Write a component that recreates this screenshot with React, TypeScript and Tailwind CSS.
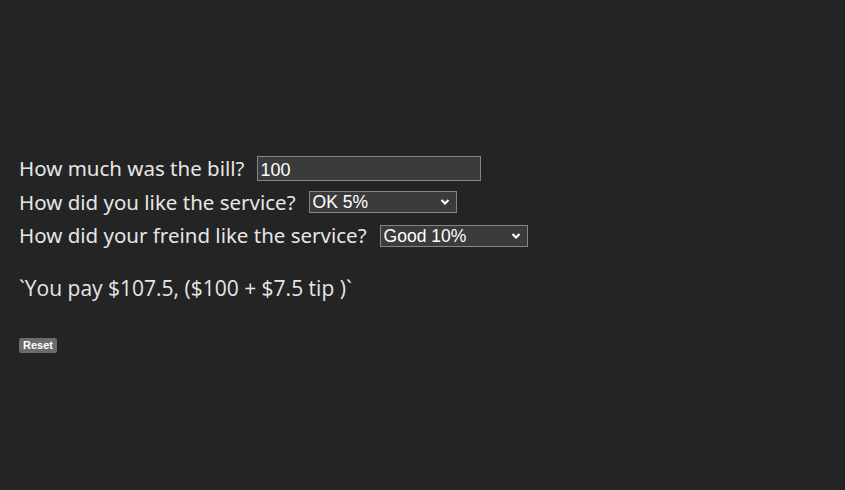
import React from "react";

function Chevron() {
  return (
    <svg width="10" height="7" viewBox="0 0 10 7" className="absolute right-[6px] top-1/2 -translate-y-1/2 pointer-events-none">
      <path d="M1.5 1.5 L5 5 L8.5 1.5" fill="none" stroke="#ffffff" strokeWidth="2.2" />
    </svg>
  );
}

function FakeSelect({ value }: { value: string }) {
  return (
    <div className="relative w-[148px] h-[22px] border border-[#858585] bg-[#3b3b3b] flex items-center pl-[3px] pt-[2px]">
      <span className="text-white text-[17.5px] leading-none" style={{ fontFamily: '"Liberation Sans", Arial, sans-serif' }}>{value}</span>
      <Chevron />
    </div>
  );
}

export default function App() {
  return (
    <div className="w-[845px] h-[490px] bg-[#242424] text-[#e6e6e6] pt-[152px] pl-[19px]" style={{ fontFamily: '"Noto Sans", sans-serif' }}>
      <div className="flex items-center h-[33px] gap-[13px]">
        <span className="text-[20.5px]">How much was the bill?</span>
        <div className="w-[224px] h-[25px] border border-[#858585] bg-[#3b3b3b] flex items-center pl-[2px] pt-[2px]">
          <span className="text-white text-[18px] leading-none" style={{ fontFamily: '"Liberation Sans", Arial, sans-serif' }}>100</span>
        </div>
      </div>
      <div className="flex items-center h-[34px] gap-[13px]">
        <span className="text-[20.5px]">How did you like the service?</span>
        <FakeSelect value="OK 5%" />
      </div>
      <div className="flex items-center h-[33px] gap-[13px]">
        <span className="text-[20.5px]">How did your freind like the service?</span>
        <FakeSelect value="Good 10%" />
      </div>
      <div className="mt-[21px] text-[21px] text-[#e6e6e6]" style={{ fontFamily: '"Open Sans", sans-serif', fontWeight: 400 }}>
        `You pay $107.5, ($100 + $7.5 tip )`
      </div>
      <div className="mt-[26px]">
        <button className="bg-[#6b6b6b] text-white text-[11px] font-bold px-[4px] h-[15px] leading-[15px] rounded-[2px]" style={{ fontFamily: '"Liberation Sans", Arial, sans-serif' }}>
          Reset
        </button>
      </div>
    </div>
  );
}
